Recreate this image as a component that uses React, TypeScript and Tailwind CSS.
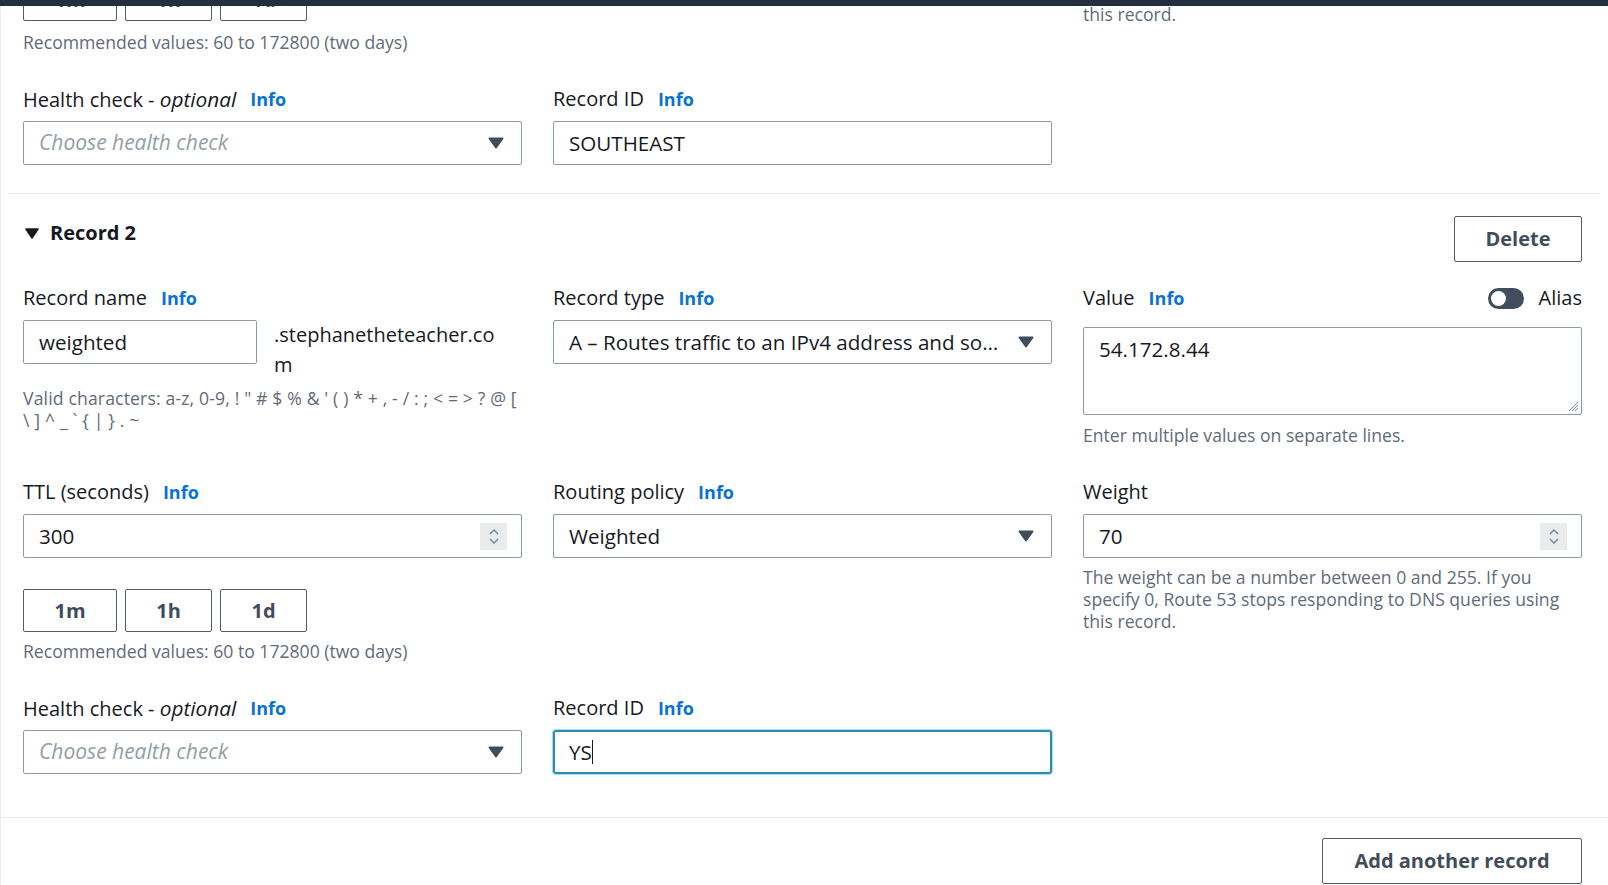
import React from 'react';

const Info = () => <span className="ml-[14px] text-[18px] font-bold text-[#0972d3]">Info</span>;

function Label({ children, info = true, className = '' }: { children: React.ReactNode; info?: boolean; className?: string }) {
  return (
    <div className={`flex items-center h-[28px] text-[20px] leading-[28px] text-[#16191f] ${className}`}>
      <span>{children}</span>
      {info && <Info />}
    </div>
  );
}

const Arrow = () => (
  <svg width="16" height="12" viewBox="0 0 16 12" className="shrink-0">
    <polygon points="1.5,1.5 14.5,1.5 8,10.5" fill="#414d5c" stroke="#414d5c" strokeWidth="2" strokeLinejoin="round" />
  </svg>
);

function Select({ value, placeholder }: { value?: string; placeholder?: string }) {
  return (
    <div className="flex items-center h-[44px] border border-[#8d99a8] rounded-[2px] pl-[15px] pr-[17px] gap-4 bg-white">
      {value ? (
        <span className="flex-1 truncate text-[20.6px] text-[#16191f]">{value}</span>
      ) : (
        <span className="flex-1 truncate text-[21px] italic text-[#929ea8]">{placeholder}</span>
      )}
      <Arrow />
    </div>
  );
}

function Spinner() {
  return (
    <div className="w-[27px] h-[27px] bg-[#e9ebed] flex flex-col items-center justify-center gap-[3px]">
      <svg width="10" height="6" viewBox="0 0 10 6"><polyline points="1,5 5,1 9,5" fill="none" stroke="#7d8998" strokeWidth="1.5" /></svg>
      <svg width="10" height="6" viewBox="0 0 10 6"><polyline points="1,1 5,5 9,1" fill="none" stroke="#7d8998" strokeWidth="1.5" /></svg>
    </div>
  );
}

function NumberInput({ value }: { value: string }) {
  return (
    <div className="flex items-center h-[44px] border border-[#8d99a8] rounded-[2px] pl-[15px] pr-[14px]">
      <span className="flex-1 text-[20.6px] text-[#16191f]">{value}</span>
      <Spinner />
    </div>
  );
}

function TtlButtons() {
  return (
    <div className="flex gap-2">
      {['1m', '1h', '1d'].map((t) => (
        <div key={t} className={`h-[43px] flex items-center justify-center border border-[#545b64] rounded-[2px] text-[20px] font-bold text-[#414d5c] ${t === '1m' ? 'w-[94px]' : 'w-[87px]'}`}>
          {t}
        </div>
      ))}
    </div>
  );
}

const Help = ({ children, className = '' }: { children: React.ReactNode; className?: string }) => (
  <div className={`text-[17.6px] leading-[22px] text-[#5f6b7a] whitespace-nowrap ${className}`}>{children}</div>
);

const weightHelp = (
  <>
    The weight can be a number between 0 and 255. If you
    <br />
    specify 0, Route 53 stops responding to DNS queries using
    <br />
    this record.
  </>
);

export default function App() {
  return (
    <div className="relative w-[1608px] h-[885px] overflow-hidden bg-white font-['Open_Sans']">
      <div className="absolute top-0 left-0 right-0 h-[6px] bg-[#232f3e] z-10" />
      <div className="absolute top-0 bottom-0 left-0 w-[1px] bg-[#eaeded]" />

      {/* tail of record 1 */}
      <div className="mx-[8px] pl-[15px] pr-[18px] pb-[28px]">
        <div className="grid grid-cols-[499px_499px_499px] gap-x-[31px] mt-[-22px]">
          <div>
            <TtlButtons />
            <Help className="mt-[10px]">Recommended values: 60 to 172800 (two days)</Help>
          </div>
          <div />
          <Help className="mt-[-19px]">{weightHelp}</Help>
        </div>
        <div className="grid grid-cols-[499px_499px_499px] gap-x-[31px] mt-[32px]">
          <div>
            <Label className="mb-[8px]">
              Health check - <i className="text-[20.8px]">optional</i>
            </Label>
            <Select placeholder="Choose health check" />
          </div>
          <div>
            <Label className="mb-[8px]">Record ID</Label>
            <div className="flex items-center h-[44px] border border-[#8d99a8] rounded-[2px] pl-[15px] text-[20.6px] text-[#16191f]">SOUTHEAST</div>
          </div>
          <div />
        </div>
      </div>

      {/* record 2 */}
      <div className="mx-[8px] pl-[15px] pr-[18px] pb-[43px] border-t border-[#e9ebed]">
        <div className="flex justify-between items-start pt-[22px] mb-[22px]">
          <div className="flex items-center gap-[11px] mt-[3px] h-[28px] pl-[2px]">
            <svg width="14" height="11" viewBox="0 0 14 11">
              <polygon points="1,1 13,1 7,10" fill="#16191f" stroke="#16191f" strokeWidth="1.5" strokeLinejoin="round" />
            </svg>
            <span className="text-[20px] font-bold text-[#16191f]">Record 2</span>
          </div>
          <div className="w-[128px] h-[46px] flex items-center justify-center border border-[#545b64] rounded-[2px] text-[20px] font-bold text-[#414d5c]">
            Delete
          </div>
        </div>

        <div className="grid grid-cols-[499px_499px_499px] gap-x-[31px]">
          <div>
            <Label className="mb-[8px]">Record name</Label>
            <div className="flex items-start gap-[17px]">
              <div className="w-[234px] h-[44px] flex items-center border border-[#8d99a8] rounded-[2px] pl-[15px] text-[20.6px] text-[#16191f]">weighted</div>
              <div className="text-[20px] leading-[30px] text-[#16191f] whitespace-nowrap">
                .stephanetheteacher.co
                <br />m
              </div>
            </div>
            <Help className="mt-[7px] tracking-[0.15px]">
              Valid characters: a-z, 0-9, ! " # $ % &amp; ' ( ) * + , - / : ; &lt; = &gt; ? @ [
              <br />
              \ ] ^ _ ` {'{'} | {'}'} . ~
            </Help>
          </div>
          <div>
            <Label className="mb-[8px]">Record type</Label>
            <Select value="A – Routes traffic to an IPv4 address and some AWS resources" />
          </div>
          <div>
            <div className="flex items-center justify-between h-[28px] mb-[15px]">
              <Label>Value</Label>
              <div className="flex items-center gap-[15px]">
                <div className="w-[36px] h-[21px] rounded-full bg-[#414d5c] flex items-center px-[3px]">
                  <div className="w-[15px] h-[15px] rounded-full bg-white" />
                </div>
                <span className="text-[20px] text-[#16191f]">Alias</span>
              </div>
            </div>
            <div className="relative h-[88px] border border-[#8d99a8] rounded-[2px] pl-[15px] pt-[6px] text-[20.6px] text-[#16191f]">
              <span>54.172.8.44</span>
              <svg className="absolute right-[2px] bottom-[2px]" width="12" height="12" viewBox="0 0 12 12">
                <path d="M11 2 L2 11 M11 5 L5 11 M11 8 L8 11" stroke="#7d8998" strokeWidth="1" />
              </svg>
            </div>
            <Help className="mt-[9px]">Enter multiple values on separate lines.</Help>
          </div>
        </div>

        <div className="grid grid-cols-[499px_499px_499px] gap-x-[31px] mt-[32px]">
          <div>
            <Label className="mb-[8px]">TTL (seconds)</Label>
            <NumberInput value="300" />
            <div className="mt-[31px]">
              <TtlButtons />
            </div>
            <Help className="mt-[8px]">Recommended values: 60 to 172800 (two days)</Help>
          </div>
          <div>
            <Label className="mb-[8px]">Routing policy</Label>
            <Select value="Weighted" />
          </div>
          <div>
            <Label className="mb-[8px]" info={false}>Weight</Label>
            <NumberInput value="70" />
            <Help className="mt-[8px]">{weightHelp}</Help>
          </div>
        </div>

        <div className="grid grid-cols-[499px_499px_499px] gap-x-[31px] mt-[32px]">
          <div>
            <Label className="mb-[8px]">
              Health check - <i className="text-[20.8px]">optional</i>
            </Label>
            <Select placeholder="Choose health check" />
          </div>
          <div>
            <Label className="mb-[8px]">Record ID</Label>
            <div className="flex items-center h-[44px] border-2 border-[#2e8bb0] rounded-[3px] pl-[14px] text-[20.6px] text-[#16191f] shadow-[0_0_0_1px_#9fe0f0]">
              YS
              <span className="inline-block w-[1px] h-[24px] bg-[#16191f]" />
            </div>
          </div>
          <div />
        </div>
      </div>

      <div className="border-t border-[#e9ebed] flex justify-end pt-[20px] pr-[26px]">
        <div className="w-[260px] h-[46px] flex items-center justify-center border border-[#545b64] rounded-[2px] text-[20px] font-bold text-[#414d5c]">
          Add another record
        </div>
      </div>
    </div>
  );
}
